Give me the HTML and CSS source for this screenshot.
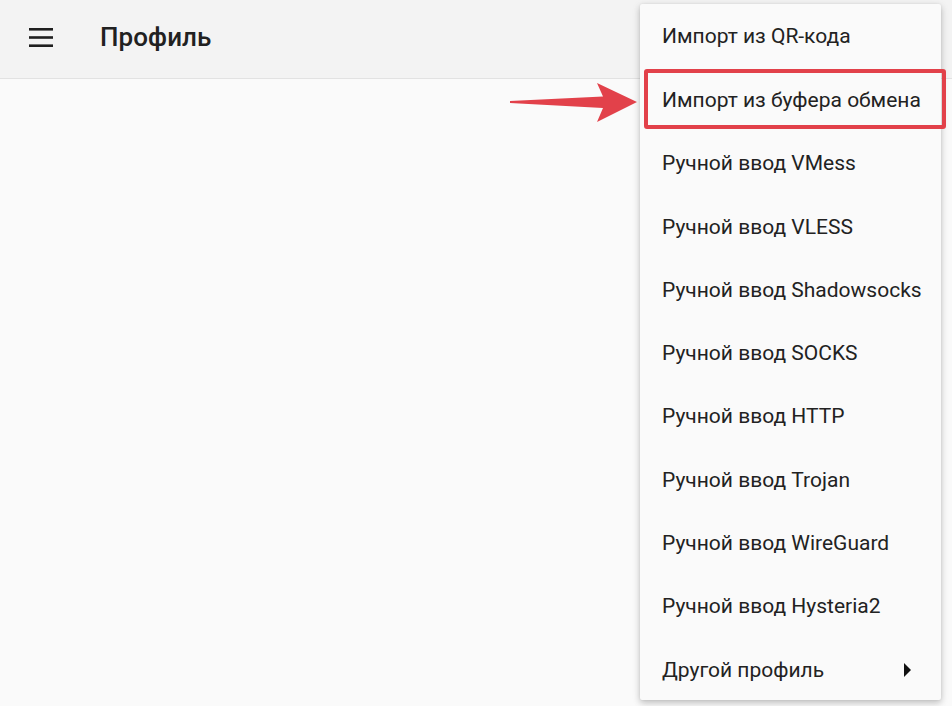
FILE: index.html
```html
<!DOCTYPE html>
<html lang="ru">
<head>
<meta charset="utf-8">
<title>Профиль</title>
<link rel="stylesheet" href="styles.css">
</head>
<body>
<div class="app">
  <header class="toolbar">
    <svg class="menu-icon" width="24" height="20" viewBox="0 0 24 20" aria-hidden="true">
      <rect x="0" y="1" width="24" height="2.6" fill="#1f1f1f"/>
      <rect x="0" y="9.2" width="24" height="2.6" fill="#1f1f1f"/>
      <rect x="0" y="17.4" width="24" height="2.6" fill="#1f1f1f"/>
    </svg>
    <h1 class="title">Профиль</h1>
  </header>
  <main class="content"></main>

  <ul class="popup">
    <li class="item">Импорт из QR-кода</li>
    <li class="item">Импорт из буфера обмена</li>
    <li class="item">Ручной ввод VMess</li>
    <li class="item">Ручной ввод VLESS</li>
    <li class="item">Ручной ввод Shadowsocks</li>
    <li class="item">Ручной ввод SOCKS</li>
    <li class="item">Ручной ввод HTTP</li>
    <li class="item">Ручной ввод Trojan</li>
    <li class="item">Ручной ввод WireGuard</li>
    <li class="item">Ручной ввод Hysteria2</li>
    <li class="item item-sub">Другой профиль<span class="sub-arrow"></span></li>
  </ul>

  <div class="highlight"></div>
  <svg class="pointer" width="130" height="42" viewBox="0 0 130 42" aria-hidden="true">
    <polygon points="0,19 93,14.5 87,1 127,20 87,40 93,26 0,21" fill="#e2414a"/>
  </svg>
</div>
</body>
</html>
```
FILE: styles.css
```css
* { box-sizing: border-box; }
html, body {
  margin: 0;
  padding: 0;
  width: 952px;
  height: 706px;
  overflow: hidden;
  background: #fafafa;
  font-family: Roboto, "Noto Sans", sans-serif;
  color: #212121;
}
.app {
  position: relative;
  width: 952px;
  height: 706px;
  display: flex;
  flex-direction: column;
}
.toolbar {
  height: 79px;
  flex: none;
  background: #f3f3f3;
  border-bottom: 1px solid #e2e2e2;
  display: flex;
  align-items: center;
  padding-left: 29px;
  padding-bottom: 4px;
}
.menu-icon {
  flex: none;
  display: block;
}
.title {
  margin: 0 0 0 47px;
  font-size: 26px;
  font-weight: 500;
  color: #212121;
  letter-spacing: 0.1px;
}
.content {
  flex: 1;
  background: #fafafa;
}
.popup {
  position: absolute;
  top: 4px;
  left: 640px;
  width: 301px;
  margin: 0;
  padding: 0;
  list-style: none;
  background: #fafafa;
  box-shadow: 0 3px 6px rgba(0,0,0,0.16), 0 2px 10px rgba(0,0,0,0.10), 0 0 2px rgba(0,0,0,0.08);
  border-radius: 2px;
}
.item {
  height: 63.3px;
  display: flex;
  align-items: center;
  padding-left: 22px;
  padding-right: 30px;
  padding-top: 2px;
  font-size: 21px;
  color: #222;
  white-space: nowrap;
}
.item:first-child {
  padding-top: 0;
}
.item-sub {
  justify-content: space-between;
}
.sub-arrow {
  width: 0;
  height: 0;
  border-top: 7px solid transparent;
  border-bottom: 7px solid transparent;
  border-left: 7px solid #111;
}
.highlight {
  position: absolute;
  left: 644px;
  top: 69px;
  width: 302px;
  height: 60px;
  border: 4px solid #e2414a;
  border-radius: 3px;
}
.pointer {
  position: absolute;
  left: 510px;
  top: 82px;
}
```
